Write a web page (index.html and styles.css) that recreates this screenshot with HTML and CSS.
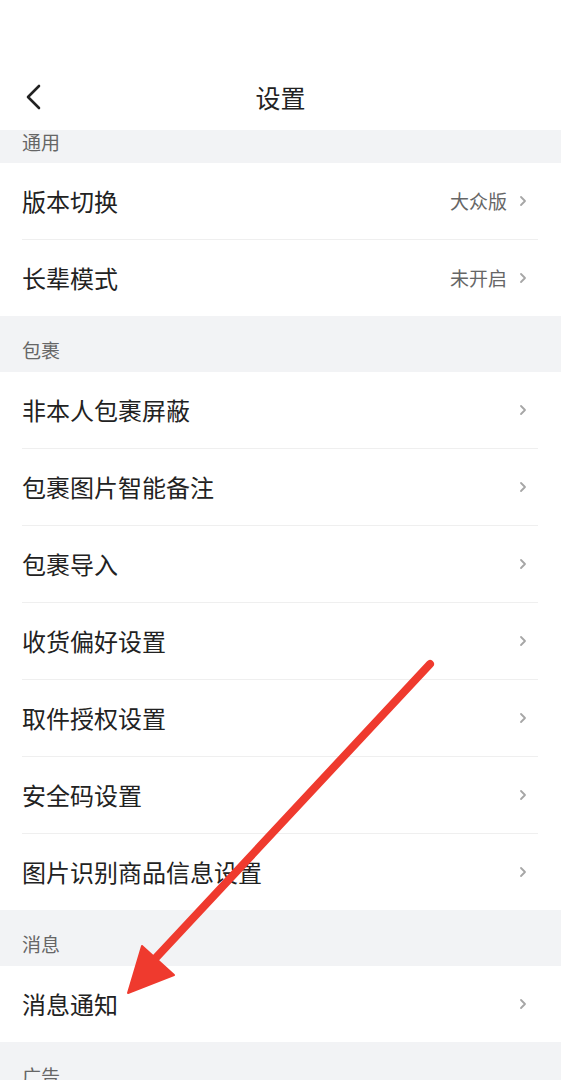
FILE: index.html
```html
<!DOCTYPE html>
<html lang="zh-CN">
<head>
<meta charset="utf-8">
<title>设置</title>
<link rel="stylesheet" href="styles.css">
</head>
<body>
<div class="page">
  <header class="top">
    <div class="nav">
      <svg class="back" width="20" height="26" viewBox="0 0 20 26"><polyline points="15,2 4,13 15,24" fill="none" stroke="#222" stroke-width="2.6" stroke-linecap="round" stroke-linejoin="round"/></svg>
      <div class="title">设置</div>
    </div>
  </header>

  <div class="section-head clipped">通用</div>
  <div class="group">
    <div class="row"><div class="row-inner"><span class="label">版本切换</span><span class="value">大众版</span><svg class="chev" width="8" height="12" viewBox="0 0 8 12"><polyline points="2,2 6,6 2,10" fill="none" stroke="#a6a6a6" stroke-width="1.8" stroke-linecap="round" stroke-linejoin="round"/></svg></div></div>
    <div class="row last"><div class="row-inner"><span class="label">长辈模式</span><span class="value">未开启</span><svg class="chev" width="8" height="12" viewBox="0 0 8 12"><polyline points="2,2 6,6 2,10" fill="none" stroke="#a6a6a6" stroke-width="1.8" stroke-linecap="round" stroke-linejoin="round"/></svg></div></div>
  </div>

  <div class="section-head">包裹</div>
  <div class="group">
    <div class="row"><div class="row-inner"><span class="label">非本人包裹屏蔽</span><svg class="chev" width="8" height="12" viewBox="0 0 8 12"><polyline points="2,2 6,6 2,10" fill="none" stroke="#a6a6a6" stroke-width="1.8" stroke-linecap="round" stroke-linejoin="round"/></svg></div></div>
    <div class="row"><div class="row-inner"><span class="label">包裹图片智能备注</span><svg class="chev" width="8" height="12" viewBox="0 0 8 12"><polyline points="2,2 6,6 2,10" fill="none" stroke="#a6a6a6" stroke-width="1.8" stroke-linecap="round" stroke-linejoin="round"/></svg></div></div>
    <div class="row"><div class="row-inner"><span class="label">包裹导入</span><svg class="chev" width="8" height="12" viewBox="0 0 8 12"><polyline points="2,2 6,6 2,10" fill="none" stroke="#a6a6a6" stroke-width="1.8" stroke-linecap="round" stroke-linejoin="round"/></svg></div></div>
    <div class="row"><div class="row-inner"><span class="label">收货偏好设置</span><svg class="chev" width="8" height="12" viewBox="0 0 8 12"><polyline points="2,2 6,6 2,10" fill="none" stroke="#a6a6a6" stroke-width="1.8" stroke-linecap="round" stroke-linejoin="round"/></svg></div></div>
    <div class="row"><div class="row-inner"><span class="label">取件授权设置</span><svg class="chev" width="8" height="12" viewBox="0 0 8 12"><polyline points="2,2 6,6 2,10" fill="none" stroke="#a6a6a6" stroke-width="1.8" stroke-linecap="round" stroke-linejoin="round"/></svg></div></div>
    <div class="row"><div class="row-inner"><span class="label">安全码设置</span><svg class="chev" width="8" height="12" viewBox="0 0 8 12"><polyline points="2,2 6,6 2,10" fill="none" stroke="#a6a6a6" stroke-width="1.8" stroke-linecap="round" stroke-linejoin="round"/></svg></div></div>
    <div class="row last"><div class="row-inner"><span class="label">图片识别商品信息设置</span><svg class="chev" width="8" height="12" viewBox="0 0 8 12"><polyline points="2,2 6,6 2,10" fill="none" stroke="#a6a6a6" stroke-width="1.8" stroke-linecap="round" stroke-linejoin="round"/></svg></div></div>
  </div>

  <div class="section-head">消息</div>
  <div class="group">
    <div class="row last"><div class="row-inner"><span class="label">消息通知</span><svg class="chev" width="8" height="12" viewBox="0 0 8 12"><polyline points="2,2 6,6 2,10" fill="none" stroke="#a6a6a6" stroke-width="1.8" stroke-linecap="round" stroke-linejoin="round"/></svg></div></div>
  </div>

  <div class="section-head">广告</div>

  <svg class="annot" width="561" height="1080" viewBox="0 0 561 1080">
    <line x1="430" y1="664" x2="152" y2="962" stroke="#ef3a2e" stroke-width="8" stroke-linecap="round"/>
    <polygon points="128,993 142,946 174,975" fill="#ef3a2e" stroke="#ef3a2e" stroke-width="2" stroke-linejoin="round"/>
  </svg>
</div>
</body>
</html>
```

FILE: styles.css
```css
html, body {
  margin: 0;
  padding: 0;
  background: #ffffff;
}

body {
  font-family: "Noto Sans CJK SC", "Noto Sans", sans-serif;
  color: #222222;
  overflow: hidden;
}

.page {
  position: relative;
  width: 561px;
  min-height: 1080px;
  background: #ffffff;
}

.top {
  height: 130px;
  padding-top: 62px;
  box-sizing: border-box;
  background: #ffffff;
}

.nav {
  position: relative;
  height: 70px;
  display: flex;
  align-items: center;
  justify-content: center;
}

.back {
  position: absolute;
  left: 24px;
  top: 22px;
}

.title {
  font-size: 25px;
  line-height: 30px;
  color: #222222;
}

.section-head {
  height: 56px;
  box-sizing: border-box;
  padding: 22px 22px 0;
  background: #f2f3f5;
  font-size: 19px;
  line-height: 24px;
  color: #666666;
}

.section-head.clipped {
  height: 33px;
  padding-top: 0;
  margin-top: 0;
}

.group {
  background: #ffffff;
}

.row {
  padding: 0 23px 0 22px;
}

.row-inner {
  height: 76px;
  border-bottom: 1px solid #efefef;
  display: flex;
  align-items: center;
}

.row.last .row-inner {
  border-bottom: none;
}

.label {
  flex: 1;
  font-size: 24px;
  line-height: 30px;
  color: #222222;
}

.value {
  font-size: 19px;
  line-height: 24px;
  color: #666666;
  margin-right: 12px;
}

.chev {
  margin-right: 11px;
  flex: none;
}

.annot {
  position: absolute;
  left: 0;
  top: 0;
  pointer-events: none;
}
```
